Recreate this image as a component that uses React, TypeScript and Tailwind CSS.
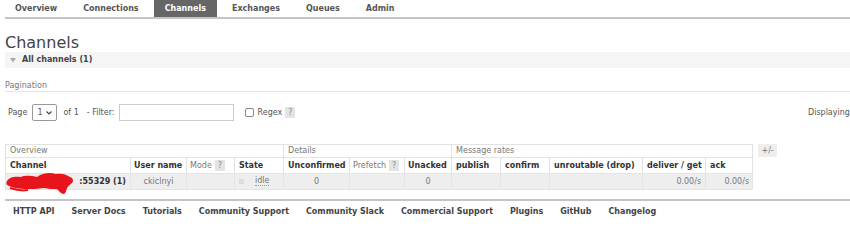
const tabs = ['Overview', 'Connections', 'Channels', 'Exchanges', 'Queues', 'Admin'];

const footerLinks = [
  'HTTP API',
  'Server Docs',
  'Tutorials',
  'Community Support',
  'Community Slack',
  'Commercial Support',
  'Plugins',
  'GitHub',
  'Changelog',
];

const Help = () => (
  <span className="ml-[3px] inline-block bg-[#e4e4e4] px-[3px] text-[8px] leading-[11px] text-[#888]">?</span>
);

export default function App() {
  return (
    <div
      className="w-[850px] h-[251px] overflow-hidden bg-white text-[#484848] text-[8px] leading-[10px]"
      style={{ fontFamily: '"DejaVu Sans", Verdana, sans-serif' }}
    >
      {/* top tabs */}
      <nav className="flex h-[19px] border-b-2 border-[#c4c4c4] ml-[5px]">
        {tabs.map((t, i) => (
          <div
            key={t}
            className={`mr-[4px] flex h-[17px] items-center px-[11px] font-bold ${i === 0 ? '-ml-px' : ''} ${
              t === 'Channels' ? 'bg-[#666] text-white' : 'text-[#555]'
            }`}
          >
            {t}
          </div>
        ))}
      </nav>

      <div className="pl-[5px]">
        <h1 className="mt-[14px] h-[19px] text-[16px] leading-[19px] font-normal text-[#444]">Channels</h1>

        <div className="flex h-[16px] items-center bg-[#f5f5f5] pl-[5px] font-bold text-[#444]">
          <svg width="6" height="5" viewBox="0 0 6 5" className="mr-[6px]">
            <path d="M0 0 L6 0 L3 4.5 Z" fill="#aaa" />
          </svg>
          All channels (1)
        </div>

        <div className="mt-[12px] h-[12px] border-b border-[#e6e6e6] text-[#777] leading-[12px]">Pagination</div>

        <div className="mt-[12px] flex h-[17px] items-center text-[#555]">
          <div className="flex w-[803px] shrink-0 items-center">
            <span className="ml-[3px]">Page</span>
            <span className="ml-[5px] flex h-[17px] w-[25px] items-center justify-between rounded-[2px] border border-[#999] px-[4px]">
              <span>1</span>
              <svg width="6" height="4" viewBox="0 0 6 4">
                <path d="M0.5 0.5 L3 3 L5.5 0.5" fill="none" stroke="#444" strokeWidth="1.2" />
              </svg>
            </span>
            <span className="ml-[6px]">of 1</span>
            <span className="ml-[8px]">- Filter:</span>
            <input
              className="ml-[4px] h-[17px] w-[115px] border border-[#ccc] bg-white outline-none"
              readOnly
            />
            <span className="ml-[11px] inline-block h-[9px] w-[9px] rounded-[2px] border border-[#888]" />
            <span className="ml-[4px]">Regex</span>
            <Help />
          </div>
          <span className="shrink-0 whitespace-nowrap text-[#555]">Displaying</span>
        </div>

        <div className="mt-[23px] flex items-start">
          <table className="w-[747px] table-fixed border-collapse whitespace-nowrap text-left">
            <colgroup>
              <col className="w-[125px]" />
              <col className="w-[56px]" />
              <col className="w-[48px]" />
              <col className="w-[49px]" />
              <col className="w-[66px]" />
              <col className="w-[55px]" />
              <col className="w-[47px]" />
              <col className="w-[49px]" />
              <col className="w-[49px]" />
              <col className="w-[93px]" />
              <col className="w-[63px]" />
              <col className="w-[47px]" />
            </colgroup>
            <thead>
              <tr className="h-[13px] text-[#777]">
                <th colSpan={4} className="border border-[#e2e2e2] px-[4px] font-normal">Overview</th>
                <th colSpan={3} className="border border-[#e2e2e2] px-[4px] font-normal">Details</th>
                <th colSpan={5} className="border border-[#e2e2e2] px-[4px] font-normal">Message rates</th>
              </tr>
              <tr className="h-[16px] text-[#333]">
                <th className="border-l border-[#e2e2e2] px-[4px]">Channel</th>
                <th className="border-l border-[#e2e2e2] px-[3px]">User name</th>
                <th className="border-l border-[#e2e2e2] px-[3px] font-normal text-[#777]">
                  Mode<Help />
                </th>
                <th className="border-l border-[#e2e2e2] px-[4px]">State</th>
                <th className="border-l border-[#e2e2e2] px-[4px]">Unconfirmed</th>
                <th className="border-l border-[#e2e2e2] px-[3px] font-normal text-[#777]">
                  Prefetch<Help />
                </th>
                <th className="border-l border-[#e2e2e2] px-[3px]">Unacked</th>
                <th className="border-l border-[#e2e2e2] px-[4px]">publish</th>
                <th className="border-l border-[#e2e2e2] px-[4px]">confirm</th>
                <th className="border-l border-[#e2e2e2] px-[4px]">unroutable (drop)</th>
                <th className="border-l border-[#e2e2e2] px-[4px]">deliver / get</th>
                <th className="border-x border-[#e2e2e2] px-[4px]">ack</th>
              </tr>
            </thead>
            <tbody>
              <tr className="h-[16px] bg-[#eeeeee] text-[#777]">
                <td className="relative border border-[#e4e4e4] px-[4px] text-right font-bold text-[#333]">
                  {/* redaction scribble over the peer address */}
                  <svg
                    width="70"
                    height="22"
                    viewBox="0 0 70 22"
                    className="absolute left-[0px] top-[-2px] overflow-visible"
                  >
                    <path
                      d="M1 9 C3 5 9 4 15 5 C20 3 26 4 31 5 C36 1 44 0 50 2 C55 1 60 2 64 5 C67 6 68 9 66 11 C64 13 62 14 61 16 C60 19 60 21 58 22 C55 22 53 19 51 17 C47 17 42 17 38 16 C32 17 25 17 19 17 C13 17 7 16 3 14 C0 13 0 11 1 9 Z"
                      fill="#e8141b"
                    />
                    <path d="M4 16 C10 18 16 19 22 18" fill="none" stroke="#e8141b" strokeWidth="2" />
                  </svg>
                  <span className="relative">:55329 (1)</span>
                </td>
                <td className="border border-[#e4e4e4] px-[3px] text-center">ckiclnyi</td>
                <td className="border border-[#e4e4e4]" />
                <td className="border border-[#e4e4e4] px-[4px]">
                  <span className="inline-flex items-center">
                    <span className="mr-[11px] inline-block h-[5px] w-[5px] bg-[#dcdcdc]" />
                    <span className="border-b border-dotted border-[#999] leading-[9px]">idle</span>
                  </span>
                </td>
                <td className="border border-[#e4e4e4] text-center">0</td>
                <td className="border border-[#e4e4e4]" />
                <td className="border border-[#e4e4e4] text-center">0</td>
                <td className="border border-[#e4e4e4]" />
                <td className="border border-[#e4e4e4]" />
                <td className="border border-[#e4e4e4]" />
                <td className="border border-[#e4e4e4] px-[4px] text-right">0.00/s</td>
                <td className="border border-[#e4e4e4] px-[3px] text-right">0.00/s</td>
              </tr>
            </tbody>
          </table>
          <span className="ml-[5px] flex h-[13px] w-[19px] items-center justify-center bg-[#eeeeee] text-[#777]">+/-</span>
        </div>
      </div>

      <div className="ml-[5px] mt-[9px] border-t-2 border-[#c4c4c4]" />
      <footer className="ml-[13px] flex h-[22px] items-center gap-[17px] font-bold text-[#444]">
        {footerLinks.map((l) => (
          <span key={l}>{l}</span>
        ))}
      </footer>
    </div>
  );
}
